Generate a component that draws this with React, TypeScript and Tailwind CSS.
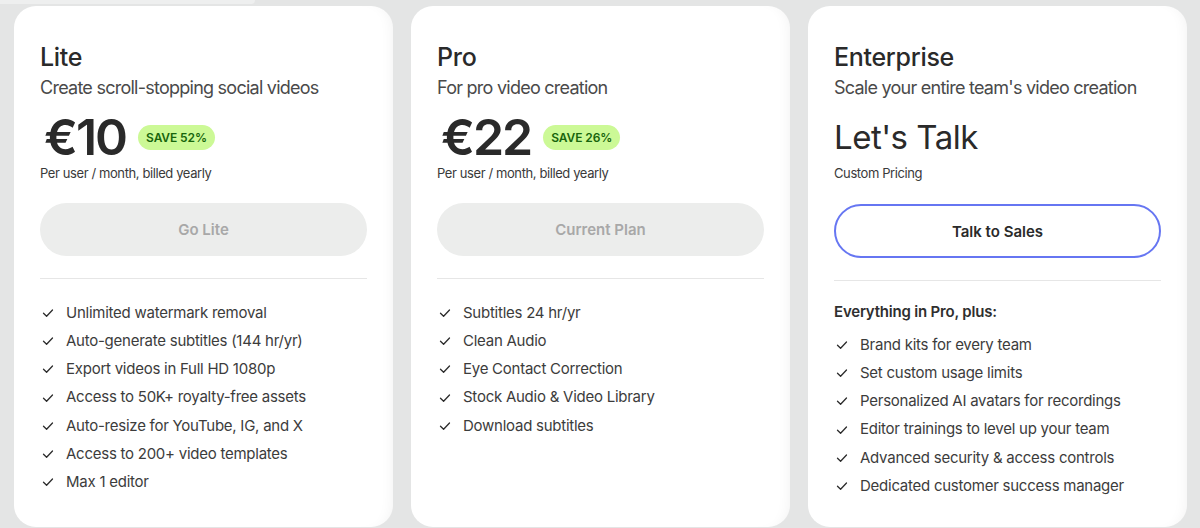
import React from "react";

type Plan = {
  name: string;
  tagline: string;
  price?: string;
  save?: string;
  priceNote: string;
  cta: string;
  ctaActive?: boolean;
  intro?: string;
  features: string[];
};

const plans: Plan[] = [
  {
    name: "Lite",
    tagline: "Create scroll-stopping social videos",
    price: "€10",
    save: "SAVE 52%",
    priceNote: "Per user / month, billed yearly",
    cta: "Go Lite",
    features: [
      "Unlimited watermark removal",
      "Auto-generate subtitles (144 hr/yr)",
      "Export videos in Full HD 1080p",
      "Access to 50K+ royalty-free assets",
      "Auto-resize for YouTube, IG, and X",
      "Access to 200+ video templates",
      "Max 1 editor",
    ],
  },
  {
    name: "Pro",
    tagline: "For pro video creation",
    price: "€22",
    save: "SAVE 26%",
    priceNote: "Per user / month, billed yearly",
    cta: "Current Plan",
    features: [
      "Subtitles 24 hr/yr",
      "Clean Audio",
      "Eye Contact Correction",
      "Stock Audio & Video Library",
      "Download subtitles",
    ],
  },
  {
    name: "Enterprise",
    tagline: "Scale your entire team's video creation",
    priceNote: "Custom Pricing",
    cta: "Talk to Sales",
    ctaActive: true,
    intro: "Everything in Pro, plus:",
    features: [
      "Brand kits for every team",
      "Set custom usage limits",
      "Personalized AI avatars for recordings",
      "Editor trainings to level up your team",
      "Advanced security & access controls",
      "Dedicated customer success manager",
    ],
  },
];

function CheckMark() {
  return (
    <svg width="12" height="10" viewBox="0 0 12 10" fill="none" className="shrink-0">
      <path d="M1.5 5.2 4.6 8.2 10.5 2" stroke="#2b2b2b" strokeWidth="1.3" strokeLinecap="round" strokeLinejoin="round" />
    </svg>
  );
}

function PlanCard({ plan }: { plan: Plan }) {
  return (
    <div className="w-[379px] h-[521px] shrink-0 rounded-[22px] bg-white px-[26px] pt-[35px] shadow-[inset_-10px_0_14px_-10px_rgba(0,0,0,0.06)]">
      <h3 className="text-[25px] leading-[32px] font-medium tracking-[-0.3px] text-[#2a2a2a]">{plan.name}</h3>
      <p className="mt-[2px] whitespace-nowrap text-[18px] leading-[26px] tracking-[-0.75px] text-[#4a4a4a]">
        {plan.tagline}
      </p>

      <div className="mt-[10px] flex h-[52px] items-center">
        {plan.price ? (
          <>
            <span className="pl-[4px] text-[50px] leading-none font-semibold tracking-[-2px] text-[#2a2a2a]">
              {plan.price}
            </span>
            <span className="ml-[12px] rounded-full bg-[#ccf996] px-[8px] py-[4px] text-[12px] leading-[17px] font-semibold tracking-[-0.1px] text-[#17650c]">
              {plan.save}
            </span>
          </>
        ) : (
          <span className="text-[33px] leading-none tracking-[-0.5px] text-[#2a2a2a]">Let's Talk</span>
        )}
      </div>

      <p className="mt-0 text-[13px] leading-[20px] tracking-[-0.4px] text-[#3a3a3a]">{plan.priceNote}</p>

      <button
        type="button"
        className={
          plan.ctaActive
            ? "mt-[21px] flex h-[54px] w-full items-center justify-center rounded-full border-2 border-[#6676f2] bg-white pt-[2px] text-[15px] font-semibold text-[#2a2a2a]"
            : "mt-[20px] flex h-[53px] w-full items-center justify-center rounded-full bg-[#ecedec] pt-[2px] text-[15px] font-semibold text-[#a8a8a8]"
        }
      >
        {plan.cta}
      </button>

      <div className="mt-[22px] h-px bg-[#e6e6e6]" />

      <div className="pt-[20px]">
        {plan.intro && (
          <p className="mb-[4px] h-[26px] text-[15px] leading-[22px] font-semibold tracking-[-0.2px] text-[#2f2f2f]">
            {plan.intro}
          </p>
        )}
        <ul className="flex flex-col">
          {plan.features.map((f) => (
            <li
              key={f}
              className="flex h-[28.2px] items-center gap-[12px] pl-[2px] text-[15px] tracking-[-0.25px] text-[#3c3c3c]"
            >
              <CheckMark />
              <span>{f}</span>
            </li>
          ))}
        </ul>
      </div>
    </div>
  );
}

export default function App() {
  return (
    <div className="h-[528px] w-[1200px] overflow-hidden bg-[#e4e5e5] font-['Inter',sans-serif]">
      <div className="h-[6px]">
        <div className="h-[4px] w-[255px] rounded-br-[4px] bg-[#eeefef]" />
      </div>
      <div className="flex gap-[18px] pl-[14px]">
        {plans.map((p) => (
          <PlanCard key={p.name} plan={p} />
        ))}
      </div>
    </div>
  );
}
